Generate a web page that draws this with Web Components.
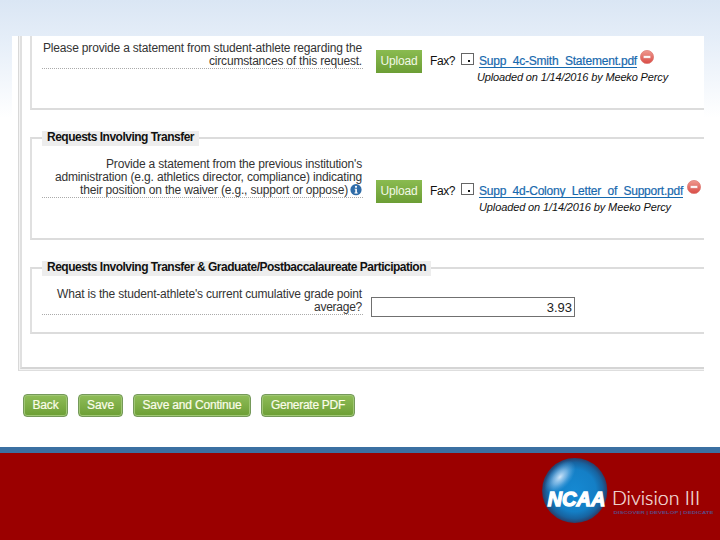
<!DOCTYPE html>
<html lang="en">
<head>
<meta charset="utf-8">
<title>Waiver request</title>
<style>
    body {
        margin: 0;
        font: 12px/13px "Liberation Sans", Arial, sans-serif;
        color: #333;
    }
</style>
</head>
<body>
<slide-page>
    <form-frame>
        <form-section style="height: 74px">
            <form-row style="padding-top: 6px">
                <fit-line slot="label" width="319">Please provide a statement from student-athlete regarding the</fit-line>
                <fit-line slot="label" width="153">circumstances of this request.</fit-line>
                <upload-field style="margin-top: 8px" file="Supp_4c-Smith_Statement.pdf" file-width="158" note-width="191" note-indent="-2" icon-gap="3"></upload-field>
            </form-row>
        </form-section>
        <form-section heading="Requests Involving Transfer" heading-width="147" style="height: 103px; margin-top: 27px">
            <form-row style="padding-top: 19px">
                <fit-line slot="label" width="256">Provide a statement from the previous institution's</fit-line>
                <fit-line slot="label" width="307">administration (e.g. athletics director, compliance) indicating</fit-line>
                <span slot="label"><fit-line width="268">their position on the waiver (e.g., support or oppose)</fit-line><info-icon></info-icon></span>
                <upload-field style="margin-top: 22px" file="Supp_4d-Colony_Letter_of_Support.pdf" file-width="204" note-width="192" note-indent="0" icon-gap="4"></upload-field>
            </form-row>
        </form-section>
        <form-section heading="Requests Involving Transfer &amp; Graduate/Postbaccalaureate Participation" heading-width="379" style="height: 67px; margin-top: 27px">
            <form-row style="padding-top: 19px">
                <fit-line slot="label" width="305">What is the student-athlete's current cumulative grade point</fit-line>
                <fit-line slot="label" width="48">average?</fit-line>
                <number-box>3.93</number-box>
            </form-row>
        </form-section>
    </form-frame>
    <button-bar>
        <green-button style="width: 45px"><fit-line width="26">Back</fit-line></green-button>
        <green-button style="width: 45px"><fit-line width="27">Save</fit-line></green-button>
        <green-button style="width: 118px"><fit-line width="99">Save and Continue</fit-line></green-button>
        <green-button style="width: 94px"><fit-line width="74">Generate PDF</fit-line></green-button>
    </button-bar>
    <ncaa-logo slot="footer"></ncaa-logo>
</slide-page>

<script>
const define = (name, html, setup) => customElements.define(
    name,
    class extends HTMLElement {
        constructor() {
            super();
            this.attachShadow({ mode: 'open' });
        }

        connectedCallback() {
            this.shadowRoot.innerHTML = html;
            setup?.(this, this.shadowRoot);
        }
    }
);

define('slide-page', `
    <style>
        :host {
            display: flex;
            flex-direction: column;
            width: 720px;
            height: 540px;
            overflow: hidden;
            background: linear-gradient(#dae6f4, #e4edf8 36px, #fff 118px);
        }
        main {
            box-sizing: border-box;
            width: 692px;
            height: 411px;
            margin: 36px 0 0 12px;
            padding-left: 6px;
            background: #fff;
        }
        footer {
            display: flex;
            justify-content: flex-end;
            box-sizing: border-box;
            height: 93px;
            border-top: 6px solid #3b70a2;
            background: #9b0000;
        }
    </style>
    <main><slot></slot></main>
    <footer><slot name="footer"></slot></footer>
`);

define('form-frame', `
    <style>
        :host {
            display: block;
            box-sizing: border-box;
            height: 335px;
            border-left: 1px solid #d8d8d8;
            border-bottom: 1px solid #dedede;
            padding: 0 0 1px 1px;
            background: #f3f3f3;
        }
        div {
            box-sizing: border-box;
            height: 100%;
            border-left: 2px solid #e0e0e0;
            border-bottom: 2px solid #d5d5d5;
            padding-left: 8px;
            background: #fff;
        }
    </style>
    <div><slot></slot></div>
`);

define('form-section', `
    <style>
        :host {
            display: block;
            box-sizing: border-box;
            border-left: 2px solid #e0e0e0;
            border-bottom: 2px solid #dcdcdc;
        }
        :host([heading]) {
            border-top: 2px solid #dcdcdc;
        }
        .legend {
            display: block;
            box-sizing: border-box;
            width: fit-content;
            height: 15px;
            margin: -8px 0 -7px 10px;
            padding: 0 5px;
            background: #ededed;
            color: #111;
            font-weight: bold;
        }
    </style>
    <slot></slot>
`, (host, root) => {
    const heading = host.getAttribute('heading');

    if (heading) {
        const legend = document.createElement('div');
        const line = document.createElement('fit-line');

        legend.className = 'legend';
        line.setAttribute('width', host.getAttribute('heading-width'));
        line.textContent = heading;
        legend.append(line);
        root.querySelector('slot').before(legend);
    }
});

define('form-row', `
    <style>
        :host {
            display: flex;
            align-items: flex-start;
            padding-left: 10px;
        }
        .label {
            display: flex;
            flex-direction: column;
            align-items: flex-end;
            box-sizing: border-box;
            width: 321px;
            padding-right: 1px;
            border-bottom: 1px dotted #aaa;
        }
    </style>
    <div class="label"><slot name="label"></slot></div>
    <slot></slot>
`);

define('info-icon', `
    <style>
        :host {
            display: inline-block;
            width: 12px;
            height: 13px;
            margin-left: 2px;
            vertical-align: top;
        }
        svg {
            display: block;
        }
    </style>
    <svg width="12" height="12" viewBox="0 0 12 12">
        <circle cx="6" cy="5.7" r="5.6" fill="#2f6ca8"/>
        <circle cx="6" cy="2.8" r="1.1" fill="#fff"/>
        <path d="M4.6 4.8h2.3v3.7h.8v.9H4.5v-.9h.8V5.6h-.7z" fill="#fff"/>
    </svg>
`);

define('upload-field', `
    <style>
        :host {
            display: grid;
            grid-template-columns: 46px 25px 13px auto;
            column-gap: 8px;
            margin-left: 13px;
        }
        .upload {
            display: flex;
            justify-content: center;
            box-sizing: border-box;
            height: 23px;
            padding-top: 5px;
            background: linear-gradient(#8abb50, #6c9e35);
            color: #f2f8e6;
        }
        .fax {
            padding-top: 5px;
            color: #111;
        }
        .check {
            display: grid;
            place-items: center;
            box-sizing: border-box;
            width: 13px;
            height: 12px;
            margin: 3px 0 0 -2px;
            border: 1px solid #666;
            background: #fff;
        }
        .check::before {
            content: "";
            width: 2px;
            height: 2px;
            margin: 3px 0 0 3px;
            background: #111;
        }
        .file {
            display: flex;
            margin-left: -5px;
        }
        a {
            height: 12px;
            margin-top: 5px;
            border-bottom: 1px solid #1769ae;
            color: #1769ae;
            -webkit-text-stroke: .2px;
        }
        .note {
            grid-column: 4;
            margin-top: -2px;
            font-size: 11px;
            font-style: italic;
            color: #111;
        }
    </style>
    <div class="upload"><fit-line width="37">Upload</fit-line></div>
    <div class="fax"><fit-line width="25">Fax?</fit-line></div>
    <div class="check"></div>
    <div class="file">
        <a><fit-line class="name"></fit-line></a>
        <svg width="14" height="14" viewBox="0 0 14 14">
            <defs>
                <linearGradient id="red" x2="0" y2="1">
                    <stop offset="0" stop-color="#ef9a90"/>
                    <stop offset="1" stop-color="#d94b45"/>
                </linearGradient>
            </defs>
            <circle cx="7" cy="7" r="6.6" fill="url(#red)" stroke="#dc7770" stroke-width=".7"/>
            <rect x="3.3" y="5.6" width="7.4" height="2.7" rx=".5" fill="#fff" stroke="#d4615a" stroke-width=".5"/>
        </svg>
    </div>
    <div class="note"><fit-line class="by">Uploaded on 1/14/2016 by Meeko Percy</fit-line></div>
`, (host, root) => {
    const name = root.querySelector('.name');

    name.textContent = host.getAttribute('file');
    name.setAttribute('width', host.getAttribute('file-width'));
    root.querySelector('.by').setAttribute('width', host.getAttribute('note-width'));
    root.querySelector('.note').style.marginLeft = `${host.getAttribute('note-indent') - 5}px`;
    root.querySelector('svg').style.marginLeft = `${host.getAttribute('icon-gap')}px`;
});

define('number-box', `
    <style>
        :host {
            box-sizing: border-box;
            width: 204px;
            height: 20px;
            margin: 9px 0 0 8px;
            padding: 3px 2px 0;
            border: 1px solid #707070;
            background: #fff;
            color: #222;
            font-size: 13px;
            text-align: right;
        }
    </style>
    <slot></slot>
`);

define('button-bar', `
    <style>
        :host {
            display: flex;
            gap: 10px;
            padding: 23px 0 0 5px;
        }
    </style>
    <slot></slot>
`);

define('green-button', `
    <style>
        :host {
            display: flex;
            justify-content: center;
            box-sizing: border-box;
            height: 23px;
            padding-top: 4px;
            border: 1px solid #75995a;
            border-radius: 4px;
            background: linear-gradient(#8fbd58, #6c9e35);
            box-shadow: inset 0 0 0 1px #a0c774;
            color: #fbfde9;
            -webkit-text-stroke: .2px;
        }
    </style>
    <slot></slot>
`);

define('ncaa-logo', `
    <style>
        :host {
            display: block;
            width: 180px;
            height: 87px;
        }
        svg {
            display: block;
        }
    </style>
    <svg width="180" height="87" viewBox="540 453 180 87">
        <defs>
            <radialGradient id="ball" cx=".5" cy=".5" r=".5">
                <stop offset="0" stop-color="#1689d2"/>
                <stop offset=".65" stop-color="#147fc6"/>
                <stop offset=".86" stop-color="#1763a0"/>
                <stop offset="1" stop-color="#2b3d68"/>
            </radialGradient>
            <radialGradient id="shine">
                <stop offset="0" stop-color="#e4f1ff" stop-opacity=".9"/>
                <stop offset=".45" stop-color="#a9d0f3" stop-opacity=".6"/>
                <stop offset="1" stop-color="#5aa9e4" stop-opacity="0"/>
            </radialGradient>
        </defs>
        <circle cx="574.7" cy="490.5" r="32.6" fill="url(#ball)"/>
        <ellipse cx="560" cy="477" rx="20" ry="11" fill="url(#shine)" transform="rotate(-48 560 477)"/>
        <text x="547.5" y="505.7" textLength="58" lengthAdjust="spacingAndGlyphs" fill="#fff" stroke="#fff" stroke-width="1.3"
            font-family="Liberation Sans" font-size="21" font-weight="bold" font-style="italic">NCAA</text>
        <text x="612" y="505.4" textLength="88" lengthAdjust="spacingAndGlyphs" fill="#f8e6e2" stroke="#f8e6e2" stroke-width=".2"
            font-family="Lato" font-size="20" font-weight="300">Division III</text>
        <text x="613.5" y="513.7" textLength="100" lengthAdjust="spacingAndGlyphs" fill="#5c4a83"
            font-family="Liberation Sans" font-size="4.4" font-weight="bold">DISCOVER | DEVELOP | DEDICATE</text>
    </svg>
`);

// Spreads one line of text over a given width, by its letter spacing.
define('fit-line', `
    <style>
        :host {
            display: inline-block;
            white-space: nowrap;
        }
    </style>
    <span><slot></slot></span>
`, (host, root) => {
    const width = Number(host.getAttribute('width'));
    const natural = root.querySelector('span').getBoundingClientRect().width;

    host.style.letterSpacing = `${(width - natural) / host.textContent.length}px`;
    host.style.width = `${width}px`;
});
</script>
</body>
</html>
